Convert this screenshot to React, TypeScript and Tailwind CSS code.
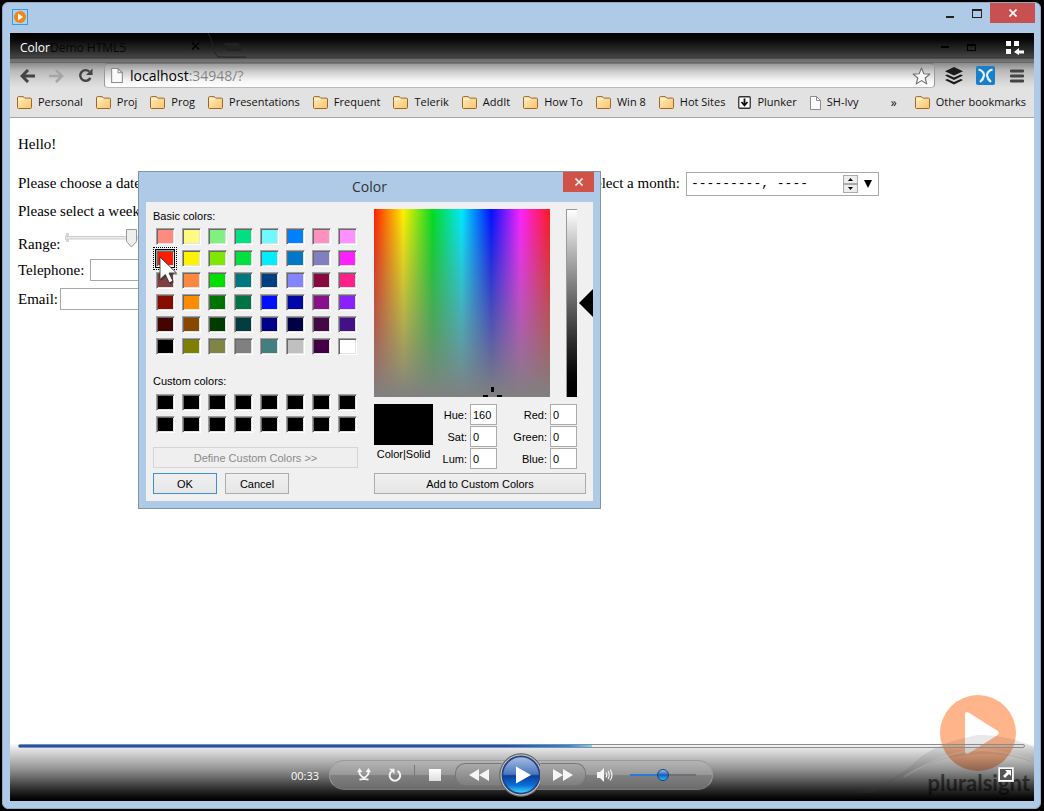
import React from "react";

const BASIC = [
  "#ff8a80", "#fffb80", "#80f080", "#00e080", "#70f8ff", "#0080ff", "#ff90c0", "#ff90ff",
  "#ff1c00", "#fff200", "#80e800", "#00e040", "#00ecff", "#0078c8", "#8080c0", "#ff20ff",
  "#804040", "#ff8840", "#00e000", "#007880", "#004080", "#8484ff", "#880840", "#ff2088",
  "#880c00", "#ff8c00", "#007400", "#007444", "#0010ff", "#0008a8", "#881088", "#8820ff",
  "#440400", "#884800", "#003c00", "#003c40", "#000088", "#000044", "#440844", "#441088",
  "#000000", "#808000", "#808444", "#808080", "#408080", "#c0c0c0", "#440044", "#ffffff",
];
const CUSTOM = Array.from({ length: 16 }, () => "#000000");

type Bookmark = { label: string; icon: "folder" | "plunker" | "page" };
const BOOKMARKS: Bookmark[] = [
  { label: "Personal", icon: "folder" },
  { label: "Proj", icon: "folder" },
  { label: "Prog", icon: "folder" },
  { label: "Presentations", icon: "folder" },
  { label: "Frequent", icon: "folder" },
  { label: "Telerik", icon: "folder" },
  { label: "AddIt", icon: "folder" },
  { label: "How To", icon: "folder" },
  { label: "Win 8", icon: "folder" },
  { label: "Hot Sites", icon: "folder" },
  { label: "Plunker", icon: "plunker" },
  { label: "SH-Ivy", icon: "page" },
];

function FolderIcon() {
  return (
    <svg width="15" height="13" viewBox="0 0 15 13" className="shrink-0">
      <defs>
        <linearGradient id="folder" x1="0" y1="0" x2="1" y2="1">
          <stop offset="0" stopColor="#ffedc0" />
          <stop offset="1" stopColor="#fbc468" />
        </linearGradient>
      </defs>
      <path d="M.5 11.5V1.8Q.5.6 1.6.6H6q.8 0 1 .9l.1.6h6.3q1.1 0 1.1 1v8.4q0 1-1 1h-12q-1 0-1-1z" fill="url(#folder)" stroke="#99692c" />
      <path d="M1.5 4.5 2.5 3.2h4l1.2-.9" fill="none" stroke="#fff6de" />
    </svg>
  );
}

function PageIcon({ w = 11, h = 14 }: { w?: number; h?: number }) {
  return (
    <svg width={w} height={h} viewBox="0 0 11 14" className="shrink-0">
      <path d="M.5.5h6l4 4v9H.5z" fill="#fafafa" stroke="#8b8b8b" />
      <path d="M6.5.5v4h4" fill="none" stroke="#8b8b8b" />
    </svg>
  );
}

function PlunkerIcon() {
  return (
    <svg width="13" height="13" viewBox="0 0 13 13" className="shrink-0">
      <rect x=".75" y=".75" width="11.5" height="11.5" rx="1" fill="#fff" stroke="#333" strokeWidth="1.3" />
      <path d="M6.5 2.5v7M3.5 6l3 3.3 3-3.3" fill="none" stroke="#111" strokeWidth="1.8" />
    </svg>
  );
}

function TitleBar() {
  return (
    <div className="flex h-[30px] items-start justify-between pr-[5px] pl-[9px]">
      <svg width="16" height="16" viewBox="0 0 16 16" className="mt-1.5">
        <rect x=".5" y=".5" width="15" height="15" fill="#a9d5f5" stroke="#3c9be0" />
        <circle cx="8" cy="8" r="6" fill="#f58410" />
        <path d="M6 4.5v7l5.2-3.5z" fill="#fff" />
      </svg>
      <div className="flex">
        <button aria-label="Minimize" className="flex h-5 w-7 items-center justify-center">
          <svg width="9" height="9" viewBox="0 0 9 9"><path d="M0 7h8v2H0z" fill="#222" /></svg>
        </button>
        <button aria-label="Maximize" className="flex h-5 w-[26px] items-center justify-center">
          <svg width="10" height="9" viewBox="0 0 10 9"><path d="M0 0h10v9H0zM1 2v6h8V2z" fill="#222" fillRule="evenodd" /></svg>
        </button>
        <button aria-label="Close" className="flex h-5 w-[45px] items-center justify-center bg-[#c75050]">
          <svg width="8" height="8" viewBox="0 0 8 8"><path d="M.5.5l7 7M7.5.5l-7 7" stroke="#fff" strokeWidth="1.7" /></svg>
        </button>
      </div>
    </div>
  );
}

function TabStrip() {
  return (
    <div className="flex h-[30px] items-center justify-between bg-[linear-gradient(to_bottom,#000_0,#060606_6px,#2c2c2c_18px,#444_24px,#333_25px,#6a6a6a_26px,#777_29px,#555_30px)] pr-2.5 pl-2.5">
      <div className="flex items-center text-xs">
        <span className="text-white">Color</span>
        <span className="w-[141px] text-[#060606]">Demo HTML5</span>
        <svg width="9" height="8" viewBox="0 0 9 8" className="-mt-1"><path d="M1 .5l7 7M8 .5l-7 7" stroke="#000" strokeWidth="1.3" /></svg>
        <svg width="38" height="30" viewBox="0 0 38 30" className="ml-2">
          <path d="M0 0q3 4 5 14 2 10 7 10h26" fill="none" stroke="#222" />
          <path d="M16 10h15l3 8H19z" fill="#222" />
        </svg>
      </div>
      <div className="flex items-center gap-[18px]">
        <svg width="8" height="8" viewBox="0 0 8 8"><path d="M0 2h8v2H0z" fill="#000" /></svg>
        <svg width="9" height="10" viewBox="0 0 9 10" className="mr-3"><path d="M0 1h9v7H0zM1 3v4h7V3z" fill="#000" fillRule="evenodd" /></svg>
        <button aria-label="Show list">
          <svg width="18" height="14" viewBox="0 0 18 14" fill="#fff">
            <path d="M0 0h5v5H0zM8 0h5v5H8zM0 8h5v5H0zM8 11l5-4v2.500h5v3h-5V14z" />
          </svg>
        </button>
      </div>
    </div>
  );
}

function Toolbar() {
  return (
    <div className="flex h-[25px] items-center bg-[linear-gradient(to_bottom,#8a8a8a,#b8b8b8_30%,#d6d6d6_75%,#e2e2e2)] pr-2.5 pl-2.5">
      <button aria-label="Back">
        <svg width="15" height="14" viewBox="0 0 15 14"><path d="M15 7H3M8 1 2 7l6 6" fill="none" stroke="#444" strokeWidth="3" /></svg>
      </button>
      <button aria-label="Forward" className="ml-3.5">
        <svg width="15" height="14" viewBox="0 0 15 14"><path d="M0 7h12M7 1l6 6-6 6" fill="none" stroke="#a5a5a5" strokeWidth="2.5" /></svg>
      </button>
      <button aria-label="Reload" className="ml-3.5">
        <svg width="15" height="15" viewBox="0 0 16 16">
          <path d="M13.2 10.5A5.7 5.7 0 1 1 12 3.8" fill="none" stroke="#444" strokeWidth="2.6" />
          <path d="M15.5.5V7.5H8.5z" fill="#444" />
        </svg>
      </button>
      <div className="ml-[11px] flex h-[25px] flex-1 items-center rounded-sm border border-[#999] border-t-[#777] border-b-[#b9b9b9] bg-[linear-gradient(to_bottom,#9a9a9a,#cfcfcf_35%,#f4f4f4_70%,#fff)] pr-[3px] pl-1.5">
        <PageIcon w={12} h={15} />
        <div className="ml-[7px] flex-1 text-sm leading-[22px] text-[#858585]"><span className="text-black">localhost</span>:34948/?</div>
        <button aria-label="Bookmark this page">
          <svg width="19" height="18" viewBox="0 0 19 18">
            <path d="M9.5 1l2.3 5.7 6 .4-4.6 3.9 1.5 5.9-5.2-3.3-5.2 3.3 1.5-5.9L1.2 7.1l6-.4z" fill="#fbfbfb" stroke="#6d6d6d" strokeWidth="1.1" strokeLinejoin="round" />
          </svg>
        </button>
      </div>
      <div className="flex items-center pl-2.5">
        <svg width="18" height="18" viewBox="0 0 18 18" fill="#1a1a1a">
          <path d="M9 0l9 4.300-9 4.300-9-4.300zM2.300 7.400 9 10.500l6.700-3.100L18 8.600l-9 4.300-9-4.300zM2.300 11.900 9 15l6.700-3.100 2.300 1.200-9 4.400-9-4.400z" />
        </svg>
        <svg width="19" height="19" viewBox="0 0 19 19" className="ml-[13px]">
          <rect width="19" height="19" rx="2" fill="#1a7fc9" />
          <path d="M2.500 3.500Q8 5 8 9.500 7.500 13 4 16M16.500 3.500Q11 5 11 9.500q.5 3.500 4 6.500" fill="none" stroke="#e4f4ff" strokeWidth="2.2" />
        </svg>
        <button aria-label="Menu" className="ml-[15px]">
          <svg width="14" height="14" viewBox="0 0 14 14"><path d="M1 2h12M1 7h12M1 12h12" stroke="#444" strokeWidth="2.8" strokeLinecap="round" /></svg>
        </button>
      </div>
    </div>
  );
}

function BookmarkBar() {
  return (
    <div className="flex h-[30px] items-center border-b border-[#a5a5a5] bg-[#e2e2e2] pr-2 pl-[7px] text-[11px] whitespace-nowrap text-[#111]">
      <div className="flex flex-1 items-center gap-[13px]">
        {BOOKMARKS.map((b) => (
          <a key={b.label} href="#" className="flex items-center gap-1.5">
            {b.icon === "folder" ? <FolderIcon /> : b.icon === "plunker" ? <PlunkerIcon /> : <PageIcon />}
            {b.label}
          </a>
        ))}
      </div>
      <button aria-label="More bookmarks" className="mr-[18px] text-xs">»</button>
      <a href="#" className="flex items-center gap-1.5">
        <FolderIcon />
        Other bookmarks
      </a>
    </div>
  );
}

function DemoPage() {
  return (
    <form className="flex flex-col pt-[17px] pl-2 font-['Liberation_Serif',serif] text-[15px] leading-[18px] text-black">
      <p>Hello!</p>
      <div className="mt-[19px] flex h-6 items-center gap-1.5">
        <div className="-mt-0.5 flex w-[662px] justify-between">
          <span>Please choose a date:</span>
          <label htmlFor="month">Please select a month:</label>
        </div>
        <div className="flex h-6 w-[193px] items-center border border-[#a9a9a9] pr-1.5 pl-1">
          <input id="month" defaultValue="---------, ----" className="w-full min-w-0 flex-1 font-['Liberation_Mono',monospace] text-[13px] outline-none" />
          <div className="flex flex-col">
            <button type="button" aria-label="Next month" className="flex h-[9px] w-[15px] items-center justify-center border border-[#aaa] bg-[#eee]">
              <svg width="5" height="3" viewBox="0 0 5 3"><path d="M0 3h5L2.5 0z" /></svg>
            </button>
            <button type="button" aria-label="Previous month" className="flex h-[9px] w-[15px] items-center justify-center border border-[#aaa] bg-[#eee]">
              <svg width="5" height="3" viewBox="0 0 5 3"><path d="M0 0h5L2.5 3z" /></svg>
            </button>
          </div>
          <button type="button" aria-label="Open calendar" className="ml-1.5">
            <svg width="8" height="8" viewBox="0 0 8 8"><path d="M0 0h8L4 8z" /></svg>
          </button>
        </div>
      </div>
      <p className="mt-1.5">Please select a week:</p>
      <div className="mt-[7px] flex h-[26px] items-end gap-1">
        <label htmlFor="range">Range:</label>
        <div className="relative h-6 w-[130px]">
          <svg width="130" height="20" viewBox="0 0 130 20">
            <path d="M2.5 4v9" stroke="#d4d4d4" strokeWidth="3" />
            <rect x="0.5" y="7.5" width="129" height="2.5" fill="#ececec" stroke="#ccc" />
            <path d="M61.500.5h10v12l-5 5.500-5-5.500z" fill="#eee" stroke="#999" />
          </svg>
          <input id="range" type="range" className="absolute inset-0 h-5 w-full opacity-0" />
        </div>
      </div>
      <div className="mt-1.5 flex h-[22px] items-center gap-1.5">
        <label htmlFor="tel">Telephone:</label>
        <input id="tel" type="tel" className="h-[22px] w-40 border border-[#a9a9a9]" />
      </div>
      <div className="mt-[7px] flex h-[22px] items-center gap-0.5">
        <label htmlFor="email">Email:</label>
        <input id="email" type="email" className="h-[22px] w-40 border border-[#a9a9a9]" />
      </div>
    </form>
  );
}

function Swatches({ colors, selected }: { colors: string[]; selected?: number }) {
  return (
    <div className="grid grid-cols-[repeat(8,18px)] gap-x-2 gap-y-[5px] pl-[3px]">
      {colors.map((c, i) => (
        <div key={i} className="relative h-[17px]">
          <button
            aria-label={`Color ${c}`}
            style={{ backgroundColor: c }}
            className="block h-[17px] w-[19px] border border-t-[#a0a0a0] border-r-white border-b-white border-l-[#a0a0a0] shadow-[inset_1px_1px_0_#696969,inset_-1px_-1px_0_#e3e3e3]"
          />
          {i === selected && (
            <>
              <span className="pointer-events-none absolute -inset-[3px] border border-dotted border-black" />
              <span className="pointer-events-none absolute -inset-px border border-black" />
            </>
          )}
        </div>
      ))}
    </div>
  );
}

function NumberField({ id, label, value }: { id: string; label: string; value: string }) {
  return (
    <div className="flex items-center justify-end gap-[3px]">
      <label htmlFor={id}>{label}</label>
      <input id={id} defaultValue={value} className="h-[21px] w-[27px] border border-[#ababab] bg-white pl-0.5" />
    </div>
  );
}

const DIALOG_BUTTON = "h-[21px] border border-[#acacac] bg-linear-to-b from-[#f0f0f0] to-[#e6e6e6]";

function ColorDialog() {
  return (
    <div role="dialog" aria-label="Color" className="absolute top-[53px] left-32 border border-[#8195ae] bg-[#aecae7] px-[7px] pb-[7px] text-[11px] leading-[14px] text-black">
      <div className="relative flex h-[30px] items-center justify-center text-sm text-[#333]">
        Color
        <button aria-label="Close dialog" className="absolute top-0 -right-px flex h-5 w-[31px] items-center justify-center bg-[#cf5349]">
          <svg width="8" height="8" viewBox="0 0 8 8"><path d="M.5.5l7 7M7.5.5l-7 7" stroke="#fff" strokeWidth="1.5" /></svg>
        </button>
      </div>
      <div className="flex gap-4 bg-[#f0f0f0] p-[7px] font-['Liberation_Sans',sans-serif]">
        <div className="flex w-[205px] flex-col">
          <p className="mb-[5px]">Basic colors:</p>
          <div className="relative">
            <Swatches colors={BASIC} selected={8} />
            <svg width="20" height="30" viewBox="0 0 20 30" className="pointer-events-none absolute top-7 left-1.5">
              <path d="M2 3v22l5.500-4.500 4 8 4-2-4-7.500H19z" fill="#000" opacity=".25" />
              <path d="M1 1v22.500l5.300-5 3.900 8.300 3.700-1.700-3.800-8.100H17.500z" fill="#fff" stroke="#222" strokeWidth=".8" />
            </svg>
          </div>
          <p className="mt-[19px] mb-1.5">Custom colors:</p>
          <Swatches colors={CUSTOM} />
          <button disabled className="mt-3.5 h-[21px] border border-[#d5d5d5] bg-[#efefef] text-[#8a8a8a]">Define Custom Colors &gt;&gt;</button>
          <div className="mt-[5px] flex gap-2">
            <button className="h-[21px] w-16 border border-[#3c8fdc] bg-linear-to-b from-[#f0f0f0] to-[#e6e6e6]">OK</button>
            <button className={`w-16 ${DIALOG_BUTTON}`}>Cancel</button>
          </div>
        </div>
        <div className="flex w-[212px] flex-col">
          <div className="flex h-[188px] gap-4">
            <div className="relative w-44 bg-[linear-gradient(to_bottom,#80808000,#808080),linear-gradient(to_right,#ff2000,#fff000,#00dc20,#00e8ff,#0010ff,#ff20ff,#ff1820)]">
              <svg width="19" height="19" viewBox="0 0 19 19" className="absolute right-12 -bottom-[9px]">
                <path d="M8 0h3v5H8zM0 8h5v2H0zM14 8h5v2h-5z" />
              </svg>
            </div>
            <div className="relative w-[11px] border-t border-l border-[#999] bg-linear-to-b from-white to-black">
              <svg width="14" height="28" viewBox="0 0 14 28" className="absolute top-[79px] left-3"><path d="M14 0v28L0 14z" /></svg>
            </div>
          </div>
          <div className="mt-[7px] flex h-[65px]">
            <div className="w-[59px] text-center">
              <div className="mb-0.5 h-[41px] bg-black" />
              Color|Solid
            </div>
            <div className="flex w-16 flex-col gap-px">
              <NumberField id="hue" label="Hue:" value="160" />
              <NumberField id="sat" label="Sat:" value="0" />
              <NumberField id="lum" label="Lum:" value="0" />
            </div>
            <div className="flex w-20 flex-col gap-px">
              <NumberField id="red" label="Red:" value="0" />
              <NumberField id="green" label="Green:" value="0" />
              <NumberField id="blue" label="Blue:" value="0" />
            </div>
          </div>
          <button className={`mt-1 ${DIALOG_BUTTON}`}>Add to Custom Colors</button>
        </div>
      </div>
    </div>
  );
}

function Watermark() {
  return (
    <div className="absolute right-0 bottom-0 h-[110px] w-[220px]">
      <svg width="220" height="110" viewBox="0 0 220 110">
        <circle cx="164" cy="42" r="38" fill="#ffb48a" />
        <path d="M151 24q0-4 3.500-2.500l28.500 18q3.500 2.500 0 5l-28.500 18q-3.500 1.500-3.500-2z" fill="#fff" />
      </svg>
      <div className="absolute right-1 bottom-1.5 font-['Lato',sans-serif] text-[22px] leading-6 font-bold text-[#777]">pluralsight</div>
    </div>
  );
}

function PlayerControls() {
  return (
    <div className="absolute inset-x-0 bottom-0 h-[58px]">
      <div className="absolute inset-0 bg-[linear-gradient(to_bottom,#0000_0,#00000018_5px,#0000003c_14px,#0000006c_26px,#00000098_35px,#000000cc_45px,#000000f0_53px,#000_57px)]" />
      <svg width="220" height="68" viewBox="0 -10 220 68" className="absolute right-0 bottom-0">
        <path d="M40 50Q80 40 100 20T164 -8Q195 -8 220 4V20Q180 6 140 14T60 50z" fill="#444" opacity=".12" />
        <path d="M90 34Q140 2 180 8T220 20" fill="none" stroke="#fff" strokeWidth="2" opacity=".1" />
      </svg>
      <div className="relative h-[5px] pt-px pr-[9px] pl-2">
        <div role="progressbar" aria-label="Playback position" aria-valuenow={57} className="h-1 rounded-sm border border-[#8c8c8c]">
          <div className="h-0.5 w-[57%] bg-[linear-gradient(to_right,#0d55d0_0,#0d55d0_85%,#1c8cf0_96%,#7fd4ff)]" />
        </div>
      </div>
      <div className="relative grid h-[53px] grid-cols-[1fr_384px_1fr] items-center pr-0.5">
        <div className="pt-[3px] pr-2.5 text-right text-[11px] text-white">00:33</div>
        <div className="flex h-[30px] items-center rounded-full border border-[#9a9aa4] border-b-[#777] bg-[linear-gradient(to_bottom,#b4b4b4,#999_48%,#808080_52%,#6c6c6c)] pl-[27px]">
          <button aria-label="Shuffle">
            <svg width="14" height="13" viewBox="0 0 14 13">
              <path d="M2.500 3v2q0 2 3 4 2.500 2.500 6 2.500M11.500 3v2q0 2-3 4-2.500 2.500-6 2.500" fill="none" stroke="#f4f4f4" strokeWidth="2" />
              <path d="M0 4 2.500 0 5.500 4zM8.500 4l3-4L14 4z" fill="#f4f4f4" />
            </svg>
          </button>
          <button aria-label="Repeat" className="ml-[17px]">
            <svg width="14" height="14" viewBox="0 0 14 14">
              <path d="M9.500 2.800A5.300 5.300 0 1 1 4 3" fill="none" stroke="#f4f4f4" strokeWidth="2" />
              <path d="M1 .8h5.500V6z" fill="#f4f4f4" />
            </svg>
          </button>
          <span className="ml-3 h-5 w-px bg-[#777]" />
          <button aria-label="Stop" className="ml-3.5 h-3 w-3 bg-linear-to-b from-white to-[#ddd]" />
          <button aria-label="Rewind" className="ml-3.5 flex h-[23px] w-[47px] items-center justify-center rounded-l-[10px] border border-[#777] border-r-transparent bg-linear-to-b from-[#aaa] to-[#7e7e7e]">
            <svg width="20" height="12" viewBox="0 0 20 12" fill="#f6f6f6"><path d="M10 0v12L0 6zM20 0v12L10 6z" /></svg>
          </button>
          <button aria-label="Play" className="-mx-px shrink-0">
            <svg width="44" height="44" viewBox="0 0 44 44" className="-mx-0.5">
              <defs>
                <linearGradient id="play" x1="0" y1="0" x2="0" y2="1">
                  <stop offset="0" stopColor="#a9bfe2" />
                  <stop offset=".48" stopColor="#4a76bd" />
                  <stop offset=".52" stopColor="#0b3f9a" />
                  <stop offset=".78" stopColor="#0a6fd8" />
                  <stop offset="1" stopColor="#3fe0ff" />
                </linearGradient>
              </defs>
              <circle cx="22" cy="22" r="21.3" fill="#7c7c7c" stroke="#666" />
              <circle cx="22" cy="22" r="20" fill="none" stroke="#c8c8c8" />
              <circle cx="22" cy="22" r="18.5" fill="url(#play)" stroke="#233f8a" strokeWidth="1.5" />
              <path d="M17 13.500v17L32 22z" fill="#fff" />
            </svg>
          </button>
          <button aria-label="Fast forward" className="flex h-[23px] w-[46px] items-center justify-center rounded-r-[10px] border border-[#777] border-l-transparent bg-linear-to-b from-[#aaa] to-[#7e7e7e]">
            <svg width="20" height="12" viewBox="0 0 20 12" fill="#f6f6f6"><path d="M0 0v12l10-6zM10 0v12l10-6z" /></svg>
          </button>
          <button aria-label="Mute" className="ml-[11px]">
            <svg width="16" height="14" viewBox="0 0 16 14">
              <path d="M0 4h3l4-4v14l-4-4H0z" fill="#f6f6f6" />
              <path d="M9 4.500q1.500 2.500 0 5M11 3q2.500 4 0 8M13 1.500q4 5.500 0 11" fill="none" stroke="#f6f6f6" strokeWidth="1.2" />
            </svg>
          </button>
          <input
            type="range"
            aria-label="Volume"
            defaultValue={50}
            className="ml-[17px] h-3 w-[66px] appearance-none bg-[linear-gradient(to_right,#2a78d8_50%,#6f6f78_50%)] bg-[length:100%_2px] bg-center bg-no-repeat [&::-webkit-slider-thumb]:size-3 [&::-webkit-slider-thumb]:appearance-none [&::-webkit-slider-thumb]:rounded-full [&::-webkit-slider-thumb]:border [&::-webkit-slider-thumb]:border-[#1c3f80] [&::-webkit-slider-thumb]:bg-[linear-gradient(to_bottom,#9cc4f0,#1b5cb8_50%,#20c0ff)]"
          />
        </div>
        <div className="flex justify-end pr-[18px]">
          <button aria-label="Full screen">
            <svg width="16" height="15" viewBox="0 0 16 15">
              <rect x=".5" y=".5" width="15" height="14" fill="#fff" stroke="#ddd" />
              <rect x="2" y="2" width="12" height="11" fill="#555" />
              <path d="M7 3h6v6l-2-2-4 4-2-2 4-4z" fill="#fff" />
            </svg>
          </button>
        </div>
      </div>
    </div>
  );
}

export default function App() {
  return (
    <div className="flex min-h-screen flex-col bg-black pt-0.5 pr-[3px] pb-0.5 pl-0.5 font-['Open_Sans',sans-serif]">
      <div className="flex flex-1 flex-col rounded-md border border-[#8fa8c4] bg-[#aecae7] pb-[7px]">
        <TitleBar />
        <div className="mr-1.5 ml-[7px] flex flex-1 flex-col bg-white">
          <TabStrip />
          <Toolbar />
          <BookmarkBar />
          <main className="relative flex-1">
            <DemoPage />
            <Watermark />
            <PlayerControls />
            <ColorDialog />
          </main>
        </div>
      </div>
    </div>
  );
}
